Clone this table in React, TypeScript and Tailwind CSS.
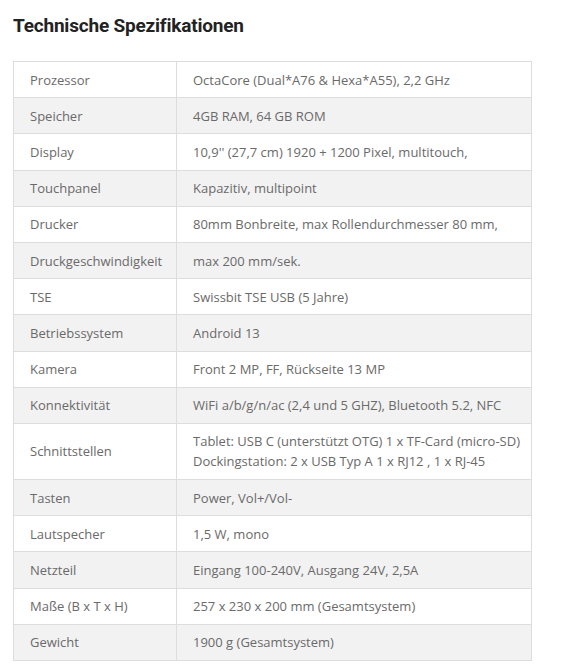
import React from "react";

const rows: [string, string[]][] = [
  ["Prozessor", ["OctaCore (Dual*A76 & Hexa*A55), 2,2 GHz"]],
  ["Speicher", ["4GB RAM, 64 GB ROM"]],
  ["Display", ["10,9'' (27,7 cm) 1920 + 1200 Pixel, multitouch,"]],
  ["Touchpanel", ["Kapazitiv, multipoint"]],
  ["Drucker", ["80mm Bonbreite, max Rollendurchmesser 80 mm,"]],
  ["Druckgeschwindigkeit", ["max 200 mm/sek."]],
  ["TSE", ["Swissbit TSE USB (5 Jahre)"]],
  ["Betriebssystem", ["Android 13"]],
  ["Kamera", ["Front 2 MP, FF, Rückseite 13 MP"]],
  ["Konnektivität", ["WiFi a/b/g/n/ac (2,4 und 5 GHZ), Bluetooth 5.2, NFC"]],
  [
    "Schnittstellen",
    [
      "Tablet: USB C (unterstützt OTG) 1 x TF-Card (micro-SD)",
      "Dockingstation: 2 x USB Typ A 1 x RJ12 , 1 x RJ-45",
    ],
  ],
  ["Tasten", ["Power, Vol+/Vol-"]],
  ["Lautspecher", ["1,5 W, mono"]],
  ["Netzteil", ["Eingang 100-240V, Ausgang 24V, 2,5A"]],
  ["Maße (B x T x H)", ["257 x 230 x 200 mm (Gesamtsystem)"]],
  ["Gewicht", ["1900 g (Gesamtsystem)"]],
];

export default function App() {
  return (
    <div className="bg-white w-[567px] min-h-[671px] pl-[13px] pt-[14px]">
      <h2 className="font-['Roboto',sans-serif] font-bold text-[19px] leading-[24px] text-[#222] tracking-[-0.2px]">
        Technische Spezifikationen
      </h2>
      <table className="mt-[23px] w-[519px] border-collapse font-['Open_Sans',sans-serif] text-[13px] leading-[20px] text-[#6a6a6a]">
        <tbody>
          {rows.map(([k, v], i) => (
            <tr key={k} className={i % 2 === 1 ? "bg-[#f2f2f2]" : "bg-white"}>
              <td className="w-[163px] border border-[#dddddd] pl-4 pr-2 py-[7.6px] align-middle">
                {k}
              </td>
              <td className="border border-[#dddddd] pl-4 pr-2 py-[7.6px] align-middle">
                {v.map((line) => (
                  <div key={line}>{line}</div>
                ))}
              </td>
            </tr>
          ))}
        </tbody>
      </table>
    </div>
  );
}
